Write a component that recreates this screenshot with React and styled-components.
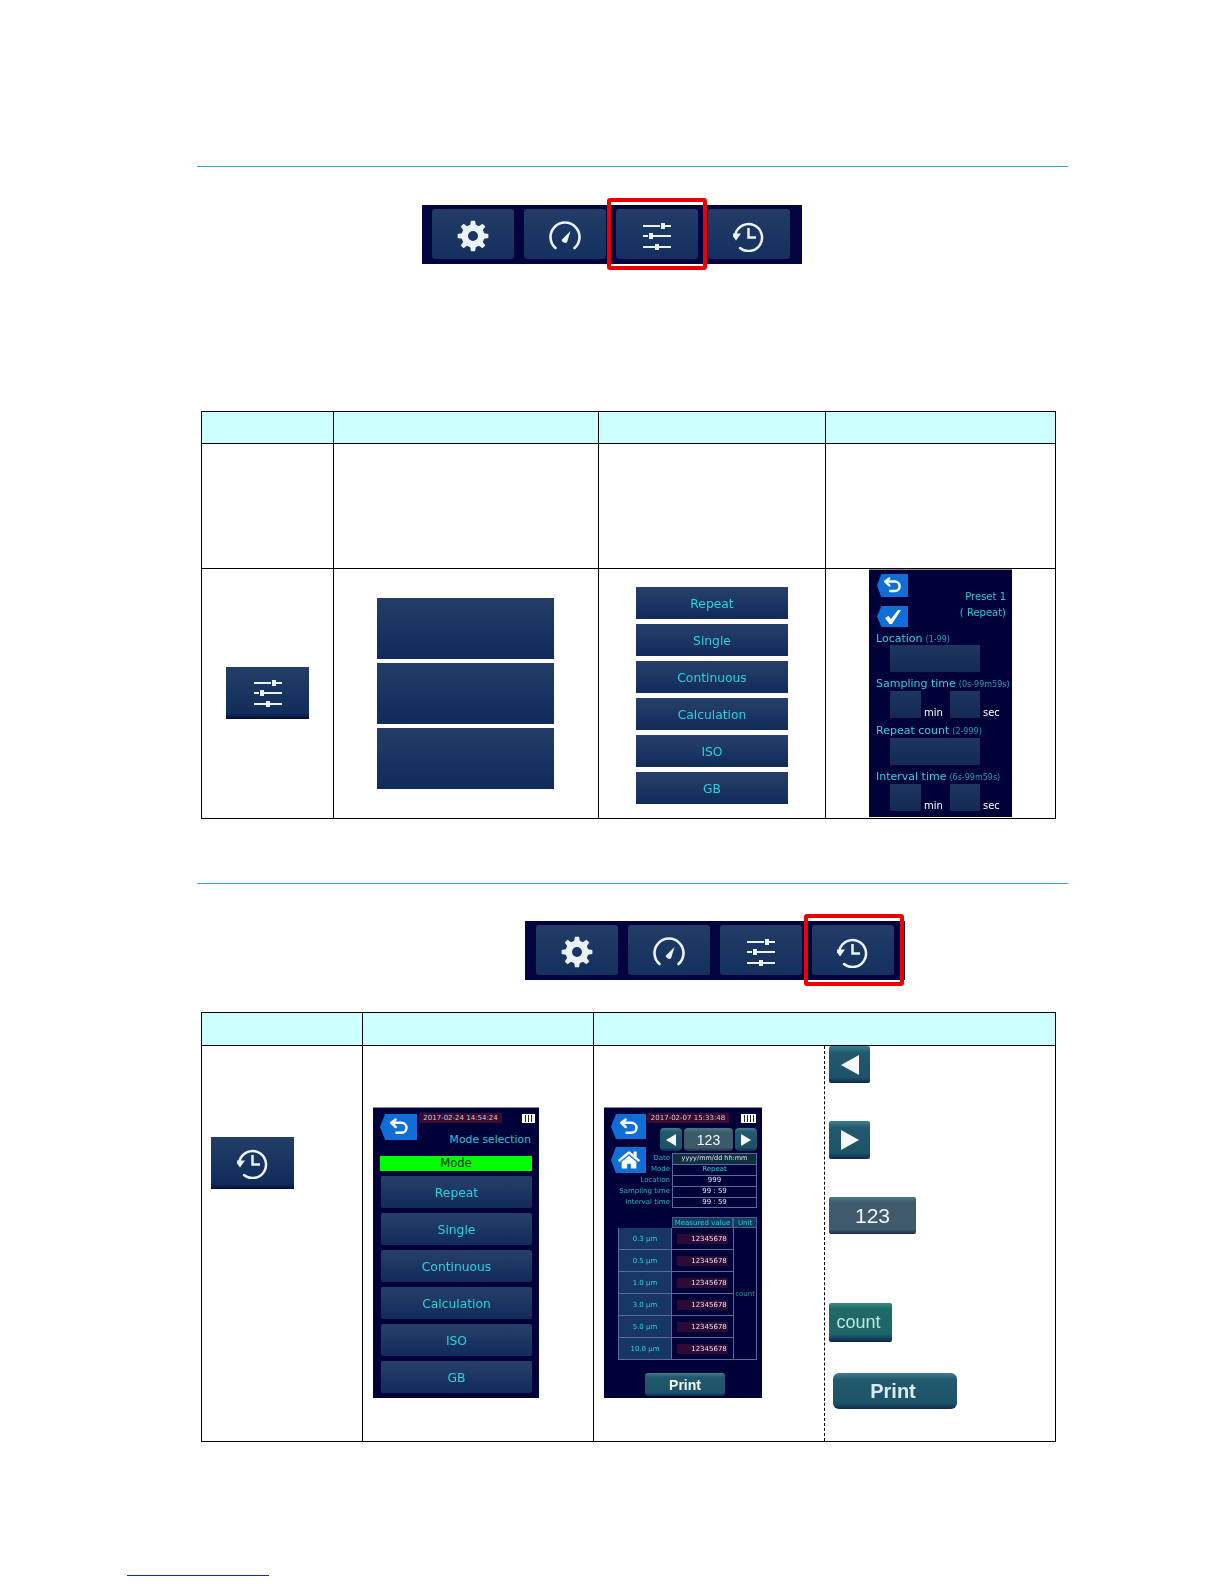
import React from "react";
import styled, { createGlobalStyle } from "styled-components";
import { FaHome } from "react-icons/fa";

const Global = createGlobalStyle`
  html, body { margin: 0; padding: 0; background: #fff; }
  body { font-family: "DejaVu Sans", sans-serif; }
`;

const Page = styled.div`
  width: 1224px;
  height: 1584px;
  overflow: hidden;
  display: flow-root;
`;

const Rule = styled.div`
  height: 1px;
  width: 871px;
  margin: ${(p) => p.$top}px 0 0 197px;
  background: #2aa9c4;
`;

const Toolbar = styled.div`
  position: relative;
  box-sizing: border-box;
  width: 380px;
  height: 59px;
  margin: ${(p) => p.$top}px 0 0 ${(p) => p.$left}px;
  padding: 4px 0 0 ${(p) => p.$pad}px;
  display: flex;
  gap: 10px;
  background: #03033f;
`;

const ToolButton = styled.div`
  box-sizing: border-box;
  width: 82px;
  height: 50px;
  padding-top: 3px;
  border-radius: 3px;
  display: flex;
  align-items: center;
  justify-content: center;
  background: linear-gradient(#223c66, #14305e);
  filter: blur(0.35px);
`;

const RedBox = styled.div`
  position: absolute;
  box-sizing: border-box;
  left: ${(p) => p.$x}px;
  top: ${(p) => p.$y}px;
  width: 100px;
  height: 72px;
  border: 4px solid #ee0000;
  border-radius: 3px;
`;

const Grid = styled.table`
  border-collapse: collapse;
  table-layout: fixed;
  width: 854px;
  margin: ${(p) => p.$top}px 0 0 201px;
  th, td { border: 1px solid #000; padding: 0; vertical-align: top; }
  th { background: #ccffff; height: ${(p) => p.$head}px; }
`;

const Cell = styled.td`
  && {
    padding: ${(p) => p.$pt || 0}px 0 0 ${(p) => p.$pl || 0}px;
    ${(p) => p.$noRight && "border-right: none;"}
    ${(p) => p.$dashed && "border-left: 1px dashed #000;"}
  }
`;

const LargeIconButton = styled.div`
  width: 83px;
  height: 52px;
  margin: ${(p) => (p.$centered ? "0 auto" : "0")};
  display: flex;
  align-items: center;
  justify-content: center;
  background: linear-gradient(#223e68, #102c5a 90%, #060a3c);
  filter: blur(0.35px);
`;

const Block = styled.div`
  width: 177px;
  height: 61px;
  margin: 0 0 4px 43px;
  background: linear-gradient(#233d68, #102b5a);
`;

const ModeStack = styled.div`
  width: ${(p) => p.$w}px;
  margin: ${(p) => (p.$center ? "0 auto" : "0")};
  display: flex;
  flex-direction: column;
  gap: ${(p) => p.$gap}px;
`;

const ModeButton = styled.div`
  box-sizing: border-box;
  height: ${(p) => p.$h}px;
  padding-top: 1px;
  display: flex;
  align-items: center;
  justify-content: center;
  color: #27d3dc;
  font-size: 12.3px;
  background: linear-gradient(#27406a, #112b5a);
  border-radius: ${(p) => p.$r || 0}px;
  filter: blur(0.35px);
`;

const Screen = styled.div`
  box-sizing: border-box;
  width: ${(p) => p.$w}px;
  height: ${(p) => p.$h}px;
  margin: 0 ${(p) => (p.$center ? "auto" : "0")};
  padding: ${(p) => p.$p};
  background: #01013a;
  border-top: 1px solid #8a8a9a;
  color: #27d3dc;
  overflow: hidden;
`;

const Soft = styled.div`
  filter: blur(0.35px);
`;

const Tag = styled.div`
  width: ${(p) => p.$w}px;
  height: ${(p) => p.$h}px;
  display: flex;
  align-items: center;
  justify-content: center;
  color: #fff;
  background: #0f6fd6;
  clip-path: polygon(14% 0, 100% 0, 100% 100%, 14% 100%, 0 50%);
  flex: none;
`;

const Row = styled.div`
  display: flex;
  align-items: ${(p) => p.$align || "flex-start"};
  justify-content: ${(p) => p.$justify || "flex-start"};
  gap: ${(p) => p.$gap || 0}px;
  margin: ${(p) => p.$m || "0"};
`;

const PresetText = styled.div`
  font-size: 10px;
  line-height: 16px;
  text-align: right;
  color: #27c8d4;
  white-space: nowrap;
`;

const FieldLabel = styled.div`
  height: 15px;
  line-height: 16px;
  font-size: 11px;
  color: #27d3dc;
  white-space: nowrap;
  margin-top: ${(p) => p.$top || 0}px;
  small { font-size: 8px; color: #1f9fb0; margin-left: 3px; }
`;

const Input = styled.div`
  width: ${(p) => p.$w}px;
  height: 27px;
  background: linear-gradient(#1d3560, #142a55);
  flex: none;
`;

const Unit = styled.span`
  width: 29px;
  height: 27px;
  font-size: 10px;
  line-height: 10px;
  color: #fff;
  flex: none;
  display: flex;
  align-items: flex-end;
  padding-left: 3px;
  box-sizing: border-box;
`;

const Clock = styled.div`
  width: ${(p) => p.$w}px;
  height: 10px;
  margin-top: ${(p) => p.$top || 0}px;
  font-size: 7px;
  line-height: 10px;
  text-align: center;
  color: #d8c8d0;
  background: #3a0a30;
  white-space: nowrap;
  flex: none;
`;

const Battery = styled.div`
  box-sizing: border-box;
  width: ${(p) => p.$w}px;
  height: 9px;
  border: 1px solid #fff;
  background: repeating-linear-gradient(90deg, #fff 0 2px, #223 2px 3px);
  flex: none;
`;

const Title = styled.div`
  font-size: 10.8px;
  line-height: 14px;
  color: #27c8d4;
  text-align: right;
`;

const GreenBar = styled.div`
  height: 15px;
  line-height: 15px;
  font-size: 11.5px;
  text-align: center;
  color: #0a3000;
  background: #00ff00;
`;

const NavBtn = styled.div`
  width: ${(p) => p.$w}px;
  height: ${(p) => p.$h}px;
  display: flex;
  align-items: center;
  justify-content: center;
  color: #f4f8fa;
  font-family: "Liberation Sans", sans-serif;
  font-size: ${(p) => p.$fs || 14}px;
  font-weight: ${(p) => p.$weight || 400};
  border-radius: ${(p) => p.$r ?? 3}px;
  background: ${(p) => p.$bg || "linear-gradient(#3f7f8e, #22596d 18%, #1d5268 85%, #0c2b4c)"};
  flex: none;
`;

const Arrow = styled.div`
  width: 0;
  height: 0;
  border-top: ${(p) => p.$s}px solid transparent;
  border-bottom: ${(p) => p.$s}px solid transparent;
  ${(p) => (p.$dir === "left" ? `border-right: ${p.$w}px solid #f4f8fa;` : `border-left: ${p.$w}px solid #f4f8fa;`)}
`;

const InfoGrid = styled.div`
  display: grid;
  grid-template-columns: 61px 85px;
  grid-auto-rows: 11px;
  font-size: 7px;
  line-height: 11px;
  margin: 7px 0 0 -35px;
`;

const InfoLabel = styled.div`
  text-align: right;
  padding-right: 2px;
  color: #1fb4c4;
  white-space: nowrap;
`;

const InfoValue = styled.div`
  border: 1px solid #5a6a9a;
  border-bottom: ${(p) => (p.$last ? "1px solid #5a6a9a" : "none")};
  box-sizing: border-box;
  text-align: center;
  line-height: 9px;
  color: ${(p) => (p.$cyan ? "#27d3dc" : "#e8e0e8")};
  background: ${(p) => (p.$bg ? "#0c3040" : "none")};
  white-space: nowrap;
  height: 11px;
  font-size: ${(p) => (p.$bg ? 6.5 : 7)}px;
`;

const DataTable = styled.div`
  display: grid;
  grid-template-columns: 54px 61px 24px;
  grid-template-rows: 11px repeat(6, 22px);
  margin: 9px 0 0 7px;
  width: 139px;
  font-size: 7px;
`;

const HeadCell = styled.div`
  grid-column: ${(p) => p.$col};
  text-align: center;
  line-height: 10px;
  color: #27c8d4;
  background: #123c5c;
  border: 1px solid #4a5a8a;
  box-sizing: border-box;
  white-space: nowrap;
  overflow: hidden;
`;

const SizeCell = styled.div`
  grid-column: 1;
  display: flex;
  align-items: center;
  justify-content: center;
  color: #27d3dc;
  background: #173664;
  border: 1px solid #5a6a9a;
  border-top: none;
  box-sizing: border-box;
`;

const ValueCell = styled.div`
  grid-column: 2;
  display: flex;
  align-items: center;
  justify-content: center;
  border-bottom: 1px solid #5a6a9a;
  box-sizing: border-box;
  color: #e8e0e8;
  span { background: #2c0a35; padding: 0 1px 0 14px; line-height: 10px; }
`;

const UnitCell = styled.div`
  grid-column: 3;
  grid-row: 2 / span 6;
  display: flex;
  align-items: center;
  justify-content: center;
  color: #169a90;
  border: 1px solid #5a6a9a;
  border-top: none;
  box-sizing: border-box;
`;

const Legend = styled.div`
  display: flex;
  flex-direction: column;
  align-items: flex-start;
`;

const LegendItem = styled.div`
  margin-top: ${(p) => p.$top}px;
  margin-left: ${(p) => p.$left || 0}px;
  filter: blur(0.3px);
`;

const CountText = styled.span`
  color: #b8e8dc;
  margin-right: 4px;
`;

const PrintText = styled.span`
  color: #d8ecec;
  margin-right: 4px;
`;

const Footnote = styled.div`
  width: 142px;
  height: 1px;
  margin: 133px 0 0 127px;
  background: #2222cc;
`;

const gearPath = (() => {
  const teeth = 8;
  const ro = 15.5, ri = 11.5, cx = 16, cy = 16;
  let d = "";
  for (let i = 0; i < teeth; i++) {
    const a = (i / teeth) * Math.PI * 2;
    const w = Math.PI / teeth;
    const pts = [
      [ri, a - w * 0.62],
      [ro, a - w * 0.34],
      [ro, a + w * 0.34],
      [ri, a + w * 0.62],
    ];
    pts.forEach(([r, t], j) => {
      const x = (cx + r * Math.sin(t)).toFixed(2);
      const y = (cy - r * Math.cos(t)).toFixed(2);
      d += `${i === 0 && j === 0 ? "M" : "L"}${x} ${y} `;
    });
  }
  return d + "Z M16 11 A5 5 0 1 0 16 21 A5 5 0 1 0 16 11 Z";
})();

const GearIcon = () => (
  <svg width="32" height="32" viewBox="0 0 32 32">
    <path d={gearPath} fill="#eaf2f6" fillRule="evenodd" />
  </svg>
);

const GaugeIcon = () => (
  <svg width="32" height="32" viewBox="0 0 32 32" fill="none">
    <path d="M6.5 28A14.5 14.5 0 1 1 25.5 28" stroke="#eaf2f6" strokeWidth="2.6" strokeLinecap="round" />
    <path d="M12.5 20L21.5 11L18 22.5Q14 24 12.5 20Z" fill="#eaf2f6" />
  </svg>
);

const SlidersIcon = () => (
  <svg width="30" height="30" viewBox="0 0 30 30" fill="none" stroke="#eaf2f6" strokeWidth="2.2">
    <path d="M1 5h17M21 5h8M1 15h5M9 15h20M1 26h13M17 26h12" />
    <path d="M21 2v6M9 12v6M15 23v6" strokeWidth="4" />
  </svg>
);

const HistoryIcon = () => (
  <svg width="32" height="32" viewBox="2 0 32 32" fill="none">
    <path d="M4.5 14A13.5 13.5 0 1 1 9 28" stroke="#eaf2f6" strokeWidth="2.5" strokeLinecap="round" />
    <path d="M0 13.5H10L5 20.5Z" fill="#eaf2f6" />
    <path d="M17.5 8V17.5H25" stroke="#eaf2f6" strokeWidth="2.5" />
  </svg>
);

const BackIcon = ({ size }) => (
  <svg width={size} height={size} viewBox="0 0 24 24" fill="none" stroke="#fff" strokeWidth="3" strokeLinecap="round" strokeLinejoin="round">
    <path d="M8 12 3 7l5-4" />
    <path d="M3 7h12a6 6 0 0 1 0 12H9" />
  </svg>
);

const CheckIcon = () => (
  <svg width="18" height="16" viewBox="0 0 18 16">
    <path d="M1 9l3.5-2 2.5 3L14 1h3L8 15H5.5Z" fill="#fff" />
  </svg>
);

const tools = [GearIcon, GaugeIcon, SlidersIcon, HistoryIcon];

const ToolRow = ({ top, left, pad, rx, ry }) => (
  <Toolbar $top={top} $left={left} $pad={pad}>
    {tools.map((Icon, i) => (
      <ToolButton key={i}>
        <Icon />
      </ToolButton>
    ))}
    <RedBox $x={rx} $y={ry} />
  </Toolbar>
);

const modes = ["Repeat", "Single", "Continuous", "Calculation", "ISO", "GB"];
const sizes = ["0.3 µm", "0.5 µm", "1.0 µm", "3.0 µm", "5.0 µm", "10.0 µm"];

const PresetScreen = () => (
  <Screen $w={143} $h={248} $center $p="4px 6px 0 7px">
    <Soft>
      <Row $justify="space-between">
        <div>
          <Tag $w={31} $h={23} style={{ marginLeft: 1 }}>
            <BackIcon size={19} />
          </Tag>
          <Tag $w={31} $h={21} style={{ marginTop: 9, marginLeft: 1 }}>
            <CheckIcon />
          </Tag>
        </div>
        <PresetText style={{ marginTop: 15 }}>
          Preset 1
          <br />( Repeat)
        </PresetText>
      </Row>
      <FieldLabel $top={4}>
        Location<small>(1-99)</small>
      </FieldLabel>
      <Input $w={90} style={{ marginLeft: 14, marginTop: -1 }} />
      <FieldLabel $top={4}>
        Sampling time<small>(0s-99m59s)</small>
      </FieldLabel>
      <Row $m="0 0 0 14px">
        <Input $w={31} />
        <Unit>min</Unit>
        <Input $w={30} />
        <Unit>sec</Unit>
      </Row>
      <FieldLabel $top={5}>
        Repeat count<small>(2-999)</small>
      </FieldLabel>
      <Input $w={90} style={{ marginLeft: 14 }} />
      <FieldLabel $top={4}>
        Interval time<small>(6s-99m59s)</small>
      </FieldLabel>
      <Row $m="0 0 0 14px">
        <Input $w={31} />
        <Unit>min</Unit>
        <Input $w={30} />
        <Unit>sec</Unit>
      </Row>
    </Soft>
  </Screen>
);

const ModeScreen = () => (
  <Screen $w={166} $h={291} $p="5px 7px 0 7px">
    <Row $gap={2}>
      <Tag $w={37} $h={26} style={{ marginTop: 1 }}>
        <BackIcon size={20} />
      </Tag>
      <Clock $w={83}>2017-02-24 14:54:24</Clock>
      <Battery $w={13} style={{ marginLeft: 18, marginTop: 1 }} />
    </Row>
    <Title style={{ marginTop: -7, paddingRight: 1 }}>Mode selection</Title>
    <GreenBar style={{ marginTop: 9 }}>Mode</GreenBar>
    <ModeStack $w={151} $gap={5} style={{ marginTop: 5, marginLeft: 1 }}>
      {modes.map((m) => (
        <ModeButton key={m} $h={32} $r={2}>
          {m}
        </ModeButton>
      ))}
    </ModeStack>
  </Screen>
);

const ResultScreen = () => (
  <Screen $w={158} $h={291} $p="5px 0 0 7px">
    <Soft>
      <Row>
        <Tag $w={35} $h={25} style={{ marginTop: 1 }}>
          <BackIcon size={20} />
        </Tag>
        <div>
          <Row>
            <Clock $w={82} style={{ marginLeft: 1 }}>
              2017-02-07 15:33:48
            </Clock>
            <Battery $w={15} style={{ marginLeft: 12, marginTop: 1 }} />
          </Row>
          <Row $gap={2} $m="5px 0 0 14px">
            <NavBtn $w={22} $h={23} $r={4}>
              <Arrow $dir="left" $s={6} $w={10} />
            </NavBtn>
            <NavBtn $w={49} $h={23} $fs={14} $r={4} $bg="linear-gradient(#4a7a84, #3c5a6a 20%, #3c5a6a 85%, #1c3048)">
              123
            </NavBtn>
            <NavBtn $w={22} $h={23} $r={4}>
              <Arrow $dir="right" $s={6} $w={10} />
            </NavBtn>
          </Row>
        </div>
      </Row>
      <Row $m="-5px 0 0 0">
        <Tag $w={35} $h={26} style={{ marginTop: 1 }}>
          <FaHome size={22} />
        </Tag>
        <InfoGrid>
          <InfoLabel>Date</InfoLabel>
          <InfoValue $bg>yyyy/mm/dd hh:mm</InfoValue>
          <InfoLabel>Mode</InfoLabel>
          <InfoValue $cyan>Repeat</InfoValue>
          <InfoLabel>Location</InfoLabel>
          <InfoValue>999</InfoValue>
          <InfoLabel>Sampling time</InfoLabel>
          <InfoValue>99 : 59</InfoValue>
          <InfoLabel>Interval time</InfoLabel>
          <InfoValue $last>99 : 59</InfoValue>
        </InfoGrid>
      </Row>
      <DataTable>
        <HeadCell $col="2">Measured value</HeadCell>
        <HeadCell $col="3">Unit</HeadCell>
        {sizes.map((s) => (
          <React.Fragment key={s}>
            <SizeCell>{s}</SizeCell>
            <ValueCell>
              <span>12345678</span>
            </ValueCell>
          </React.Fragment>
        ))}
        <UnitCell>count</UnitCell>
      </DataTable>
      <NavBtn $w={80} $h={23} $fs={14} $weight={700} $r={3} style={{ margin: "13px 0 0 34px" }}>
        Print
      </NavBtn>
    </Soft>
  </Screen>
);

export default function App() {
  return (
    <Page>
      <Global />
      <Rule $top={166} />
      <ToolRow top={38} left={422} pad={10} rx={185} ry={-7} />

      <Grid $top={147} $head={31}>
        <colgroup>
          <col style={{ width: 132 }} />
          <col style={{ width: 265 }} />
          <col style={{ width: 227 }} />
          <col style={{ width: 230 }} />
        </colgroup>
        <thead>
          <tr>
            <th />
            <th />
            <th />
            <th />
          </tr>
        </thead>
        <tbody>
          <tr style={{ height: 125 }}>
            <td />
            <td />
            <td />
            <td />
          </tr>
          <tr style={{ height: 250 }}>
            <Cell $pt={98}>
              <LargeIconButton $centered>
                <SlidersIcon />
              </LargeIconButton>
            </Cell>
            <Cell $pt={29}>
              <Block />
              <Block />
              <Block />
            </Cell>
            <Cell $pt={18}>
              <ModeStack $w={152} $gap={5} $center>
                {modes.map((m) => (
                  <ModeButton key={m} $h={32}>
                    {m}
                  </ModeButton>
                ))}
              </ModeStack>
            </Cell>
            <Cell>
              <PresetScreen />
            </Cell>
          </tr>
        </tbody>
      </Grid>

      <Rule $top={64} />
      <ToolRow top={37} left={525} pad={11} rx={279} ry={-7} />

      <Grid $top={32} $head={32}>
        <colgroup>
          <col style={{ width: 161 }} />
          <col style={{ width: 231 }} />
          <col style={{ width: 231 }} />
          <col style={{ width: 231 }} />
        </colgroup>
        <thead>
          <tr>
            <th />
            <th />
            <th colSpan={2} />
          </tr>
        </thead>
        <tbody>
          <tr style={{ height: 396 }}>
            <Cell $pt={91} $pl={9}>
              <LargeIconButton>
                <HistoryIcon />
              </LargeIconButton>
            </Cell>
            <Cell $pt={61} $pl={10}>
              <ModeScreen />
            </Cell>
            <Cell $pt={61} $pl={10} $noRight>
              <ResultScreen />
            </Cell>
            <Cell $dashed $pl={4}>
              <Legend>
                <LegendItem $top={0}>
                  <NavBtn $w={41} $h={37} $r={2}>
                    <Arrow $dir="left" $s={10} $w={18} />
                  </NavBtn>
                </LegendItem>
                <LegendItem $top={38}>
                  <NavBtn $w={41} $h={38} $r={2}>
                    <Arrow $dir="right" $s={10} $w={18} />
                  </NavBtn>
                </LegendItem>
                <LegendItem $top={38}>
                  <NavBtn $w={87} $h={37} $fs={21} $r={2} $bg="linear-gradient(#4a7a84, #3f5a6c 15%, #3f5a6c 88%, #1a2a48)">
                    123
                  </NavBtn>
                </LegendItem>
                <LegendItem $top={69}>
                  <NavBtn $w={63} $h={39} $fs={18} $r={2} $bg="linear-gradient(#3d8a84, #1f6a66 15%, #1f6468 80%, #0c2450)">
                    <CountText>count</CountText>
                  </NavBtn>
                </LegendItem>
                <LegendItem $top={31} $left={4}>
                  <NavBtn $w={124} $h={36} $fs={20} $weight={700} $r={6}>
                    <PrintText>Print</PrintText>
                  </NavBtn>
                </LegendItem>
              </Legend>
            </Cell>
          </tr>
        </tbody>
      </Grid>

      <Footnote />
    </Page>
  );
}
